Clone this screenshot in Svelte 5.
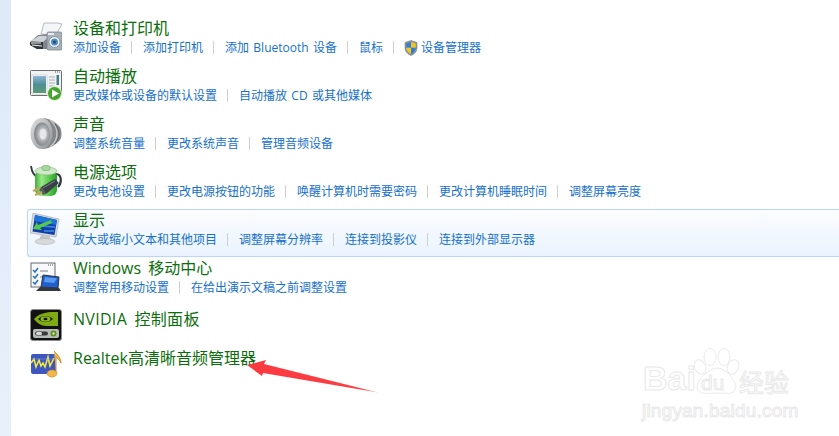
<script>
  const rows = [
    { icon: 'printer', title: '设备和打印机', links: ['添加设备', '添加打印机', '添加 Bluetooth 设备', '鼠标', '*设备管理器'] },
    { icon: 'play', title: '自动播放', links: ['更改媒体或设备的默认设置', '自动播放 CD 或其他媒体'] },
    { icon: 'sound', title: '声音', links: ['调整系统音量', '更改系统声音', '管理音频设备'] },
    { icon: 'power', title: '电源选项', links: ['更改电池设置', '更改电源按钮的功能', '唤醒计算机时需要密码', '更改计算机睡眠时间', '调整屏幕亮度'] },
    { icon: 'display', title: '显示', active: true, links: ['放大或缩小文本和其他项目', '调整屏幕分辨率', '连接到投影仪', '连接到外部显示器'] },
    { icon: 'mobile', title: 'Windows 移动中心', links: ['调整常用移动设置', '在给出演示文稿之前调整设置'] },
    { icon: 'nvidia', title: 'NVIDIA 控制面板', links: [], tall: true },
    { icon: 'realtek', title: 'Realtek高清晰音频管理器', links: [] }
  ];
</script>

{#snippet shield()}
  <svg class="shield" viewBox="0 0 14 16" width="14" height="16">
    <path d="M7 .5 13 2.5V8c0 3.6-2.6 6-6 7.5C3.600 14 1 11.600 1 8V2.500Z" fill="#8d9298" stroke="#77808a" stroke-width=".6"/>
    <path d="M7 2 2.300 3.500V7.800H7Z" fill="#2f7fd6"/>
    <path d="M7 2 11.700 3.500V7.800H7Z" fill="#f4c91e"/>
    <path d="M2.300 7.800H7V14C4.300 12.800 2.500 10.700 2.300 7.800Z" fill="#f4c91e"/>
    <path d="M11.700 7.800H7V14C9.700 12.800 11.500 10.700 11.700 7.800Z" fill="#2f7fd6"/>
  </svg>
{/snippet}

{#snippet icon(name)}
  <svg class="icon" viewBox="0 0 32 32" width="32" height="32">
    {#if name === 'printer'}
      <path d="M14 2 28 2 32 3 26 14 11 13Z" fill="#f4f5f6" stroke="#a6acb2" stroke-width=".8"/>
      <path d="M0 21 8 14 20 13 20 28 7 28 0 24Z" fill="#7f858c"/>
      <path d="M1 20 9 15 20 15 13 21Z" fill="#cfd3d7"/>
      <path d="M0 21 13 21 13 28 7 28 0 24Z" fill="#32363a"/>
      <path d="M1 22 11 22M2 24 12 25" stroke="#f3f4f5" stroke-width="1.200"/>
      <rect x="17" y="11" width="15" height="18" rx="1.500" fill="#a8b0b8" stroke="#747c84" stroke-width=".7"/>
      <rect x="18" y="12" width="6" height="2" fill="#e8ecef"/>
      <circle cx="24.500" cy="21" r="5.500" fill="#eef3f7" stroke="#6d7f90" stroke-width=".7"/>
      <circle cx="24.500" cy="21" r="3.500" fill="#4f8ac0"/>
      <circle cx="24.500" cy="21" r="1.500" fill="#1e4d78"/>
    {:else if name === 'play'}
      <rect x="0.500" y="1.500" width="31" height="25" rx="1" fill="#f0f2f3" stroke="#6f6f6f"/>
      <rect x="2" y="6" width="15" height="19" fill="#fff" stroke="#b4b8bc" stroke-width=".5"/>
      <defs><linearGradient id="pg" x1="0" y1="0" x2="0" y2="1"><stop offset="0" stop-color="#8fb6d6"/><stop offset=".5" stop-color="#4f8f96"/><stop offset="1" stop-color="#5d9a72"/></linearGradient></defs>
      <rect x="3" y="7" width="13" height="17" fill="url(#pg)"/>
      <path d="M19 8H25M19 11H25M19 14H25M19 17H24M19 20H23" stroke="#a8adb3"/>
      <rect x="26.500" y="6" width="2.500" height="10" fill="#3f7f8c"/>
      <path d="M25 3H26M27 3H28M29 3H30" stroke="#555"/>
      <circle cx="24.500" cy="24.500" r="7" fill="#43a52c" stroke="#e9f5e2" stroke-width="1"/>
      <path d="M22 20.500 29 24.500 22 28.500Z" fill="#fff"/>
    {:else if name === 'sound'}
      <defs>
        <linearGradient id="sg" x1="0" y1="0" x2="1" y2="1"><stop offset="0" stop-color="#dfe0e1"/><stop offset="1" stop-color="#8f9295"/></linearGradient>
        <radialGradient id="sc" cx=".55" cy=".5" r=".6"><stop offset="0" stop-color="#f0f1f1"/><stop offset=".45" stop-color="#b4b7b9"/><stop offset="1" stop-color="#70757a"/></radialGradient>
      </defs>
      <path d="M13 1C22 2 26 6 30 10 32 14 32 20 30 23 26 27 22 31 13 32Z" fill="#85888b"/>
      <path d="M20 3C25 7 27 12 27 17S25 26 20 30" fill="none" stroke="#c2c4c6" stroke-width="1.500"/>
      <path d="M25 7C28 11 29 14 29 17S28 23 25 27" fill="none" stroke="#5f6265" stroke-width="1"/>
      <ellipse cx="11.500" cy="16.500" rx="11" ry="15.500" fill="url(#sg)"/>
      <ellipse cx="12" cy="17" rx="8" ry="11.500" fill="url(#sc)"/>
      <ellipse cx="13" cy="17" rx="3.500" ry="5.500" fill="#e6e7e8"/>
    {:else if name === 'power'}
      <path d="M1 1C2 8 4 11 8 12" fill="none" stroke="#2f3842" stroke-width="1.800"/>
      <path d="M26 9C32 9 32 18 28 22" fill="none" stroke="#2f3842" stroke-width="2.200"/>
      <defs><linearGradient id="bg" x1="0" y1="0" x2="1" y2="0"><stop offset="0" stop-color="#3faf3a"/><stop offset=".3" stop-color="#9ae888"/><stop offset=".7" stop-color="#4ec445"/><stop offset="1" stop-color="#2d9a2f"/></linearGradient></defs>
      <rect x="5" y="5" width="22" height="26" rx="6" fill="url(#bg)"/>
      <ellipse cx="16" cy="6" rx="11" ry="4" fill="#cfe9c9" stroke="#8abb82" stroke-width=".7"/>
      <rect x="12" y="0.500" width="8" height="5" rx="2" fill="#a5d99b" stroke="#77a36f" stroke-width=".6"/>
      <path d="M11 22 25 14 29 18 16 29Z" fill="#3b4046"/>
      <path d="M13 23 25 16" stroke="#7d838a" stroke-width="1"/>
      <path d="M11 22 16 29 13 30 9 25Z" fill="#555b60"/>
      <path d="M10 23 3 26M12 27 5 30" stroke="#c9a45b" stroke-width="2.200"/>
    {:else if name === 'display'}
      <path d="M3 0 29 6 26 24 0 20Z" fill="#d8dde2" stroke="#9ea5ac" stroke-width=".6"/>
      <path d="M5 2 27 7 24.500 22 2.500 18.500Z" fill="#123fa8"/>
      <path d="M5 2 27 7 26 12 4 8Z" fill="#1f74d8"/>
      <path d="M12 13 25 14 M14 18 24 18" stroke="#3d8de0" stroke-width="1.300"/>
      <path d="M3 16 7 9 8 12 21 7 22 10 10 15 12 17Z" fill="#55c94d"/>
      <path d="M11 22H19L21 27H9Z" fill="#c3c7ca"/>
      <ellipse cx="15" cy="28.500" rx="10" ry="3" fill="#d6d8da" stroke="#a9adb1" stroke-width=".5"/>
    {:else if name === 'mobile'}
      <rect x="1" y="2" width="24" height="24" fill="#f8f9fa" stroke="#5f6870"/>
      <path d="M18 4H19M20 4H21M22 4H23" stroke="#555"/>
      <path d="M3 9 5 11 8 7M3 15 5 17 8 13M3 21 5 23 8 19" fill="none" stroke="#2a6ec8" stroke-width="1.500"/>
      <path d="M10 10H18M10 16H15" stroke="#7a8087" stroke-width="1"/>
      <path d="M13 14 29 16 28 27 11 26Z" fill="#1f5fd0" stroke="#2c3138" stroke-width="1"/>
      <path d="M15 16 27 17.500 24 22 14 21Z" fill="#5c9af0"/>
      <path d="M10 26 29 27 31 30 6 30Z" fill="#33383e"/>
    {:else if name === 'nvidia'}
      <rect x="0.500" y="0.500" width="31" height="31" rx="2.500" fill="#121212" stroke="#8b8b8b"/>
      <path d="M4 10C10 3 19 3 28 3V17H16C11 17 7 14 4 10Z" fill="#7faa12"/>
      <path d="M8 10C12 6 19 6 23 10 19 14 12 14 8 10Z" fill="#121212"/>
      <ellipse cx="15.500" cy="10" rx="5" ry="2.800" fill="#8cb818"/>
      <ellipse cx="15.500" cy="10" rx="2" ry="1.200" fill="#121212"/>
      <rect x="3" y="20" width="26" height="9" rx="2" fill="#b8bcb8"/>
      <rect x="5" y="22.500" width="13" height="4" rx="2" fill="#3a3a3a"/>
      <rect x="6" y="23" width="6" height="3" rx="1.500" fill="#d8d8d8"/>
      <circle cx="23.500" cy="24.500" r="3" fill="#5e8f1f"/>
      <circle cx="23.500" cy="24.500" r="1.200" fill="#d5e6a8"/>
    {:else if name === 'realtek'}
      <rect x="1" y="6" width="25" height="20" rx="2" fill="#3e57c0"/>
      <path d="M1 15 4 11 6 19 9 12 11 18 13 15 15 19 18 9 20 18 24 10" fill="none" stroke="#f8ec3a" stroke-width="1.500"/>
      <path d="M2 11H24" stroke="#7f92dd" stroke-width=".6"/>
      <path d="M24 3C27 6 31 10 31 15 29 11 27 10 26 9L26 25" fill="#f0b84a" stroke="#c98f2a" stroke-width="1"/>
      <ellipse cx="22" cy="25.500" rx="5" ry="3.500" fill="#f0b84a" stroke="#c98f2a" stroke-width=".7"/>
    {/if}
  </svg>
{/snippet}

<div class="page">
  <aside class="side"></aside>
  <main class="list">
    {#each rows as row}
      <section class="row" class:active={row.active} class:short={!row.links.length} class:tall={row.tall}>
        <div class="pic">{@render icon(row.icon)}</div>
        <div class="body">
          <h3>{row.title}</h3>
          {#if row.links.length}
            <nav>
              {#each row.links as l}
                <span class="link">
                  {#if l[0] === '*'}{@render shield()}{l.slice(1)}{:else}{l}{/if}
                </span>
              {/each}
            </nav>
          {/if}
        </div>
      </section>
    {/each}
  </main>

  <svg class="arrow" viewBox="0 0 132 33" width="132" height="33">
    <defs><linearGradient id="ar" x1="0" y1="0" x2="1" y2="0"><stop offset="0" stop-color="#fb3a40"/><stop offset=".85" stop-color="#fb3f44"/><stop offset="1" stop-color="#fc7f7f"/></linearGradient></defs>
    <path d="M0 5 19 0 17 4 131 32.500 16 13 15 16Z" fill="url(#ar)"/>
  </svg>

  <div class="mark">
    <svg class="paw" viewBox="0 0 46 50" width="46" height="50">
      <g fill="#fff" stroke="#ebebeb" stroke-width="1">
        <ellipse cx="16" cy="10" rx="6" ry="8.500"/>
        <ellipse cx="30" cy="10" rx="6" ry="8.500"/>
        <ellipse cx="6" cy="20" rx="5.500" ry="7.500" transform="rotate(-25 6 20)"/>
        <ellipse cx="39" cy="20" rx="5.500" ry="7.500" transform="rotate(25 39 20)"/>
        <path d="M23 21C31 21 42 33 42 40 41 49 31 46 23 46S4 49 3 40C3 33 15 21 23 21Z"/>
      </g>
    </svg>
    <span class="bai">Bai</span>
    <span class="du">du</span>
    <span class="jy">经验</span>
    <span class="url">jingyan.baidu.com</span>
  </div>
</div>

<style>
  :global(body) { margin: 0; background: #fff; }
  .page {
    position: relative;
    width: 839px;
    height: 436px;
    overflow: hidden;
    display: flex;
    background: #fff;
    font-family: "Open Sans", "Noto Sans CJK SC", sans-serif;
  }
  .side {
    width: 11px;
    flex: none;
    background: linear-gradient(#dfe9f7, #e8f0fb);
  }
  .list {
    flex: 1;
    padding: 17px 0 0 16px;
    min-width: 0;
  }
  .row {
    display: flex;
    box-sizing: border-box;
    height: 48px;
    padding-left: 2px;
    border: 1px solid transparent;
    border-right: 0;
  }
  .row.active {
    border-color: #b8d6fb;
    border-radius: 3px 0 0 3px;
    background: linear-gradient(#fbfdff, #eaf3fe);
  }
  .row.short { height: 38px; }
  .row.tall { height: 39px; }
  .row.tall h3 { letter-spacing: .3px; }
  .pic {
    width: 43px;
    flex: none;
  }
  .icon { display: block; margin-top: 3px; }
  .body { min-width: 0; }
  h3 {
    margin: 0;
    font-size: 16px;
    line-height: 21px;
    font-weight: 400;
    color: #0a6e0a;
    white-space: nowrap;
    word-spacing: 3px;
  }
  .row.short h3 { padding-top: 3px; }
  nav {
    display: flex;
    align-items: center;
    height: 17px;
    white-space: nowrap;
  }
  .link {
    display: inline-flex;
    align-items: center;
    height: 13px;
    font-size: 12px;
    line-height: 13px;
    color: #1670cc;
    padding: 0 10px 0 11px;
    border-left: 1px solid #cfcfcf;
    word-spacing: 1.2px;
  }
  .link:first-child { padding-left: 0; border-left: 0; }
  .shield { margin: 0 3px 0 -1px; flex: none; }
  .arrow {
    position: absolute;
    left: 247px;
    top: 360px;
  }
  .mark {
    position: absolute;
    left: 640px;
    top: 347px;
    width: 160px;
    height: 80px;
    color: #fff;
    -webkit-text-stroke: 1px #e9e9e9;
    font-family: "Liberation Sans", "Noto Sans CJK SC", sans-serif;
  }
  .paw { position: absolute; left: 54px; top: 0; }
  .bai, .du, .jy, .url { position: absolute; white-space: nowrap; }
  .bai { left: 3px; top: 12px; font-size: 34px; line-height: 38px; font-weight: 700; }
  .du { left: 61px; top: 25px; font-size: 21px; line-height: 22px; }
  .jy { left: 99px; top: 20px; font-size: 25px; line-height: 32px; }
  .url { left: 2px; top: 53px; font-size: 19px; line-height: 22px; letter-spacing: .2px; }
</style>
